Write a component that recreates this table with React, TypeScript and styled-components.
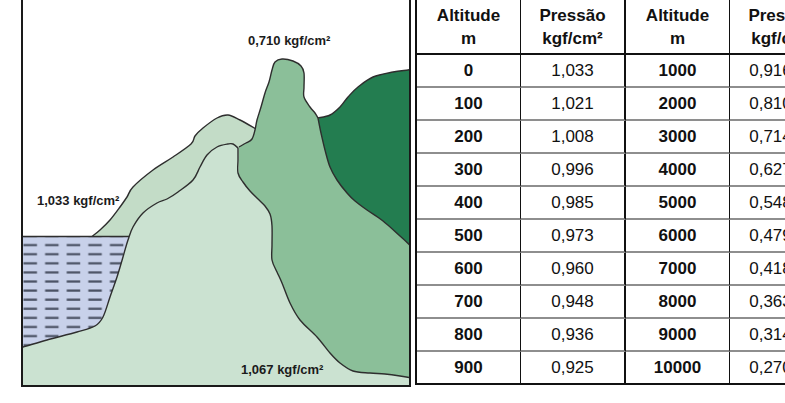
import React from "react";
import styled, { createGlobalStyle } from "styled-components";

const Global = createGlobalStyle`
  html, body { margin: 0; padding: 0; background: #ffffff; }
  body { font-family: "Liberation Sans", Arial, sans-serif; color: #111; }
`;

const Page = styled.div`
  width: 785px;
  height: 403px;
  overflow: hidden;
  display: flex;
  align-items: flex-start;
  background: #fff;
`;

const Frame = styled.div`
  position: relative;
  margin-left: 21px;
  width: 386px;
  height: 385px;
  border-left: 2px solid #1a1a1a;
  border-right: 2px solid #1a1a1a;
  border-bottom: 2px solid #1a1a1a;
  flex: none;
  overflow: hidden;
  svg { display: block; }
`;

const Label = styled.span<{ $x: number; $y: number }>`
  position: absolute;
  left: ${(p) => p.$x}px;
  top: ${(p) => p.$y}px;
  font-family: "Liberation Sans", Arial, sans-serif;
  font-weight: 700;
  font-size: 13px;
  line-height: 15px;
  color: #1b1b1b;
  white-space: nowrap;
`;

const Table = styled.div`
  margin-left: 4px;
  flex: none;
  display: grid;
  grid-template-columns: 104px 105px 104px 104px;
  border-left: 2px solid #111;
  border-bottom: 2px solid #111;
`;

const Cell = styled.div<{ $col: number; $head?: boolean; $last?: boolean; $bold?: boolean; $shift?: number }>`
  box-sizing: border-box;
  height: ${(p) => (p.$head ? 55 : p.$last ? 31 : 33)}px;
  border-right: ${(p) => (p.$col === 1 ? 2 : 1)}px solid #111;
  border-bottom: ${(p) =>
    p.$head ? "2px solid #111" : p.$last ? "none" : "2px solid #8e8e8e"};
  display: flex;
  flex-direction: column;
  align-items: center;
  justify-content: center;
  padding-right: ${(p) => p.$shift ?? 0}px;
  font-family: "Liberation Sans", Arial, sans-serif;
  font-size: 17px;
  line-height: 23px;
  font-weight: ${(p) => (p.$head || p.$bold ? 700 : 400)};
  color: #111;
  white-space: nowrap;
`;

type P = [number, number];

function seg(pts: P[], move: boolean): string {
  let d = move ? `M${pts[0][0]},${pts[0][1]}` : `L${pts[0][0]},${pts[0][1]}`;
  for (let i = 0; i < pts.length - 1; i++) {
    const p0 = pts[i - 1] || pts[i];
    const p1 = pts[i];
    const p2 = pts[i + 1];
    const p3 = pts[i + 2] || p2;
    const c1x = p1[0] + (p2[0] - p0[0]) / 6;
    const c1y = p1[1] + (p2[1] - p0[1]) / 6;
    const c2x = p2[0] - (p3[0] - p1[0]) / 6;
    const c2y = p2[1] - (p3[1] - p1[1]) / 6;
    d += ` C${c1x.toFixed(1)},${c1y.toFixed(1)} ${c2x.toFixed(1)},${c2y.toFixed(1)} ${p2[0]},${p2[1]}`;
  }
  return d;
}

const backPts: P[] = [
  [92, 236.5], [100, 230], [110, 220], [120, 207], [127, 197], [133, 187],
  [153, 170], [173, 157], [191, 144], [195, 136], [203, 128], [217, 118],
  [228, 115], [240, 120], [256, 129],
];

const medPts: P[] = [
  [239, 147], [246, 143], [252, 139], [255, 130], [257, 120], [261, 107],
  [265, 93], [269, 82], [272, 70], [275, 62], [282, 59], [293, 61],
  [301, 66], [304, 73], [304, 87], [304, 97], [310, 107], [315, 113], [318, 118],
];

const darkTop: P[] = [
  [412, 69], [408, 70], [393, 72], [373, 77], [358, 87], [348, 97],
  [340, 107], [330, 115], [318, 118],
];
const darkDown: P[] = [
  [318, 118], [321, 133], [325, 150], [330, 167], [337, 180], [347, 193],
  [355, 201], [367, 210], [383, 221], [400, 236], [412, 247],
];

const frontLeft: P[] = [
  [18, 348], [23, 347], [47, 340], [77, 332], [95, 326], [103, 317],
  [110, 297], [117, 277], [123, 257], [128, 240], [133, 227], [143, 213],
  [157, 203], [167, 199], [178, 192], [193, 180], [200, 167], [207, 155],
  [217, 147], [228, 144], [233, 144], [238, 148],
];
const frontRight: P[] = [
  [238, 148], [238, 160], [238, 173], [243, 182], [250, 191], [258, 199],
  [265, 206], [270, 214], [272, 226], [272, 245], [272, 260], [277, 272],
  [282, 283], [290, 303], [300, 320], [317, 337], [330, 353], [340, 363],
  [353, 371], [370, 373], [385, 374], [400, 376], [412, 378],
];

const STROKE = "#2e2e2e";

function Diagram() {
  const back = seg(backPts, true);
  const med = seg(medPts, true);
  const dark = seg(darkTop, true) + " " + seg(darkDown, false);
  const front = seg(frontLeft, true) + " " + seg(frontRight, false);
  return (
    <svg width="386" height="385" viewBox="23 0 386 385">
      <defs>
        <pattern id="waves" x="23" y="240" width="21.6" height="9.1" patternUnits="userSpaceOnUse">
          <rect x="0.5" y="4" width="13.5" height="2.2" fill="#4b5264" />
        </pattern>
      </defs>
      <path d={back + " L250,250 L130,250 L128,236.5 Z"} fill="#c3dcc7" />
      <path d={back} fill="none" stroke={STROKE} strokeWidth="1.4" strokeLinejoin="round" />
      <rect x="18" y="236.5" width="125" height="130" fill="#c8d1ea" />
      <rect x="18" y="236.5" width="125" height="130" fill="url(#waves)" />
      <path d="M18,236.5 H132" stroke={STROKE} strokeWidth="1.6" />
      <path d={med + " L412,118 L412,392 L236,392 Z"} fill="#8bbf99" />
      <path d={med} fill="none" stroke={STROKE} strokeWidth="1.4" strokeLinejoin="round" />
      <path d={dark + " L414,247 L414,69 Z"} fill="#237d50" />
      <path d={dark} fill="none" stroke={STROKE} strokeWidth="1.4" strokeLinejoin="round" />
      <path d={front + " L414,392 L18,392 Z"} fill="#cbe2d1" />
      <path d={front} fill="none" stroke={STROKE} strokeWidth="1.4" strokeLinejoin="round" />
    </svg>
  );
}

const rows: [string, string, string, string][] = [
  ["0", "1,033", "1000", "0,916"],
  ["100", "1,021", "2000", "0,810"],
  ["200", "1,008", "3000", "0,714"],
  ["300", "0,996", "4000", "0,627"],
  ["400", "0,985", "5000", "0,548"],
  ["500", "0,973", "6000", "0,479"],
  ["600", "0,960", "7000", "0,418"],
  ["700", "0,948", "8000", "0,363"],
  ["800", "0,936", "9000", "0,314"],
  ["900", "0,925", "10000", "0,270"],
];

export default function App() {
  return (
    <>
      <Global />
      <Page>
        <Frame>
          <Diagram />
          <Label $x={225} $y={33}>0,710 kgf/cm²</Label>
          <Label $x={14} $y={193}>1,033 kgf/cm²</Label>
          <Label $x={218} $y={362}>1,067 kgf/cm²</Label>
        </Frame>
        <Table>
          <Cell $col={0} $head>
            <span>Altitude</span>
            <span>m</span>
          </Cell>
          <Cell $col={1} $head>
            <span>Pressão</span>
            <span>kgf/cm²</span>
          </Cell>
          <Cell $col={2} $head>
            <span>Altitude</span>
            <span>m</span>
          </Cell>
          <Cell $col={3} $head>
            <span>Pressão</span>
            <span>kgf/cm²</span>
          </Cell>
          {rows.map((r, i) => {
            const last = i === rows.length - 1;
            return (
              <React.Fragment key={r[0]}>
                <Cell $col={0} $bold $last={last}>{r[0]}</Cell>
                <Cell $col={1} $last={last}>{r[1]}</Cell>
                <Cell $col={2} $bold $last={last}>{r[2]}</Cell>
                <Cell $col={3} $last={last} $shift={22}>{r[3]}</Cell>
              </React.Fragment>
            );
          })}
        </Table>
      </Page>
    </>
  );
}
